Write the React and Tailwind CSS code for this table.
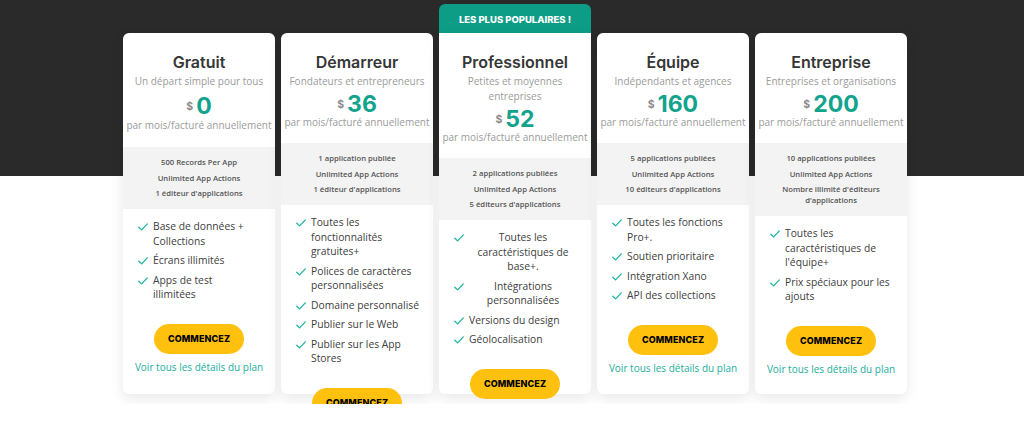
import React from "react"

const plans = [
  {
    name: "Gratuit",
    sub: ["Un départ simple pour tous"],
    price: "0",
    shift: true,
    limits: [["500 Records Per App"], ["Unlimited App Actions"], ["1 éditeur d'applications"]],
    features: [
      { lines: ["Base de données +", "Collections"] },
      { lines: ["Écrans illimités"] },
      { lines: ["Apps de test", "illimitées"] },
    ],
  },
  {
    name: "Démarreur",
    sub: ["Fondateurs et entrepreneurs"],
    price: "36",
    limits: [["1 application publiée"], ["Unlimited App Actions"], ["1 éditeur d'applications"]],
    features: [
      { lines: ["Toutes les", "fonctionnalités", "gratuites+"] },
      { lines: ["Polices de caractères", "personnalisées"] },
      { lines: ["Domaine personnalisé"] },
      { lines: ["Publier sur le Web"] },
      { lines: ["Publier sur les App", "Stores"] },
    ],
  },
  {
    name: "Professionnel",
    popular: true,
    sub: ["Petites et moyennes", "entreprises"],
    price: "52",
    limits: [["2 applications publiées"], ["Unlimited App Actions"], ["5 éditeurs d'applications"]],
    features: [
      { lines: ["Toutes les", "caractéristiques de", "base+."], center: true },
      { lines: ["Intégrations", "personnalisées"], center: true },
      { lines: ["Versions du design"] },
      { lines: ["Géolocalisation"] },
    ],
  },
  {
    name: "Équipe",
    sub: ["Indépendants et agences"],
    price: "160",
    limits: [["5 applications publiées"], ["Unlimited App Actions"], ["10 éditeurs d'applications"]],
    features: [
      { lines: ["Toutes les fonctions", "Pro+."] },
      { lines: ["Soutien prioritaire"] },
      { lines: ["Intégration Xano"] },
      { lines: ["API des collections"] },
    ],
  },
  {
    name: "Entreprise",
    sub: ["Entreprises et organisations"],
    price: "200",
    limits: [["10 applications publiées"], ["Unlimited App Actions"], ["Nombre illimité d'éditeurs", "d'applications"]],
    features: [
      { lines: ["Toutes les", "caractéristiques de", "l'équipe+"] },
      { lines: ["Prix spéciaux pour les", "ajouts"] },
    ],
  },
]

const Check = () => (
  <svg width="10" height="8" viewBox="0 0 10 8" className="shrink-0 mt-[4px]">
    <path d="M0.8 4.2 L3.6 6.9 L9.3 0.9" fill="none" stroke="#1fb3a0" strokeWidth="1.3" strokeLinecap="round" strokeLinejoin="round" />
  </svg>
)

const PlanCard = ({ plan }) => (
  <div className="w-[152px] flex flex-col shrink-0">
    {plan.popular ? (
      <div className="h-[29px] rounded-t-[6px] bg-[#0d9c86] flex items-center justify-center pt-[3px] text-white text-[9.5px] font-extrabold font-['Inter',sans-serif]">
        LES PLUS POPULAIRES !
      </div>
    ) : (
      <div className="h-[29px]"></div>
    )}

    <div
      className={
        "h-[361px] bg-white shadow-[0_5px_14px_rgba(0,0,0,0.09)] flex flex-col items-center text-center pt-[19px] font-['Open_Sans',sans-serif] " +
        (plan.popular ? "rounded-b-[6px]" : "rounded-[6px]")
      }
    >
      <h3 className="text-[16px] leading-[20px] font-semibold text-[#363636] font-['Inter',sans-serif]">{plan.name}</h3>
      <div className="mt-[1.5px] text-[10px] leading-[15px] text-[#9b9b9b]">
        {plan.sub.map((s, i) => (
          <div key={i}>{s}</div>
        ))}
      </div>

      {/* price */}
      <div className={"flex items-center gap-[3px] h-[20px] " + (plan.shift ? "mt-[7.5px]" : "mt-[5.5px]")}>
        <span className="text-[10.5px] leading-[12px] font-bold text-[#8a8a8a] font-['Inter',sans-serif] mt-[1px]">$</span>
        <span className="text-[23px] leading-[20px] font-bold text-[#12a38d] font-['Inter',sans-serif]">{plan.price}</span>
      </div>
      <div className={"text-[10px] leading-[15px] text-[#9b9b9b] whitespace-nowrap " + (plan.shift ? "mt-[2px]" : "mt-[1px]")}>
        par mois/facturé annuellement
      </div>

      {/* limits */}
      <div className={"w-full bg-[#f3f3f3] py-[10px] flex flex-col gap-[4.5px] text-[7.7px] leading-[11px] font-semibold text-[#555555] " + (plan.shift ? "mt-[14px]" : "mt-[13px]")}>
        {plan.limits.map((l, i) => (
          <div key={i}>
            {l.map((t, j) => (
              <div key={j}>{t}</div>
            ))}
          </div>
        ))}
      </div>

      {/* features */}
      <ul className="mt-[10px] w-full pl-[15px] pr-[14px] flex flex-col gap-[5px] text-[10.3px] leading-[14.5px] text-[#404040]">
        {plan.features.map((f, i) => (
          <li key={i} className="flex items-start gap-[5px]">
            <Check />
            <div className={"flex-1 whitespace-nowrap " + (f.center ? "text-center" : "text-left")}>
              {f.lines.map((t, j) => (
                <div key={j}>{t}</div>
              ))}
            </div>
          </li>
        ))}
      </ul>

      <button className="mt-[22px] shrink-0 w-[90px] h-[30px] rounded-full bg-[#ffc10e] text-black text-[9px] font-extrabold font-['Inter',sans-serif] tracking-[0.1px]">
        COMMENCEZ
      </button>
      <a href="#" className="mt-[6px] block text-[10px] leading-[15px] text-[#22ad9b] whitespace-nowrap">
        Voir tous les détails du plan
      </a>
    </div>
  </div>
)

const App = () => {
  return (
    <div className="h-[423px] w-full overflow-hidden bg-[linear-gradient(to_bottom,#2a2a2a_0px,#2a2a2a_176px,#ffffff_176px)]">
      {/* pricing row */}
      <div className="h-[404px] overflow-hidden pt-[4px] pl-[6px] flex justify-center items-start gap-[6px]">
        {plans.map((p, i) => (
          <PlanCard key={i} plan={p} />
        ))}
      </div>
    </div>
  )
}

export default App
